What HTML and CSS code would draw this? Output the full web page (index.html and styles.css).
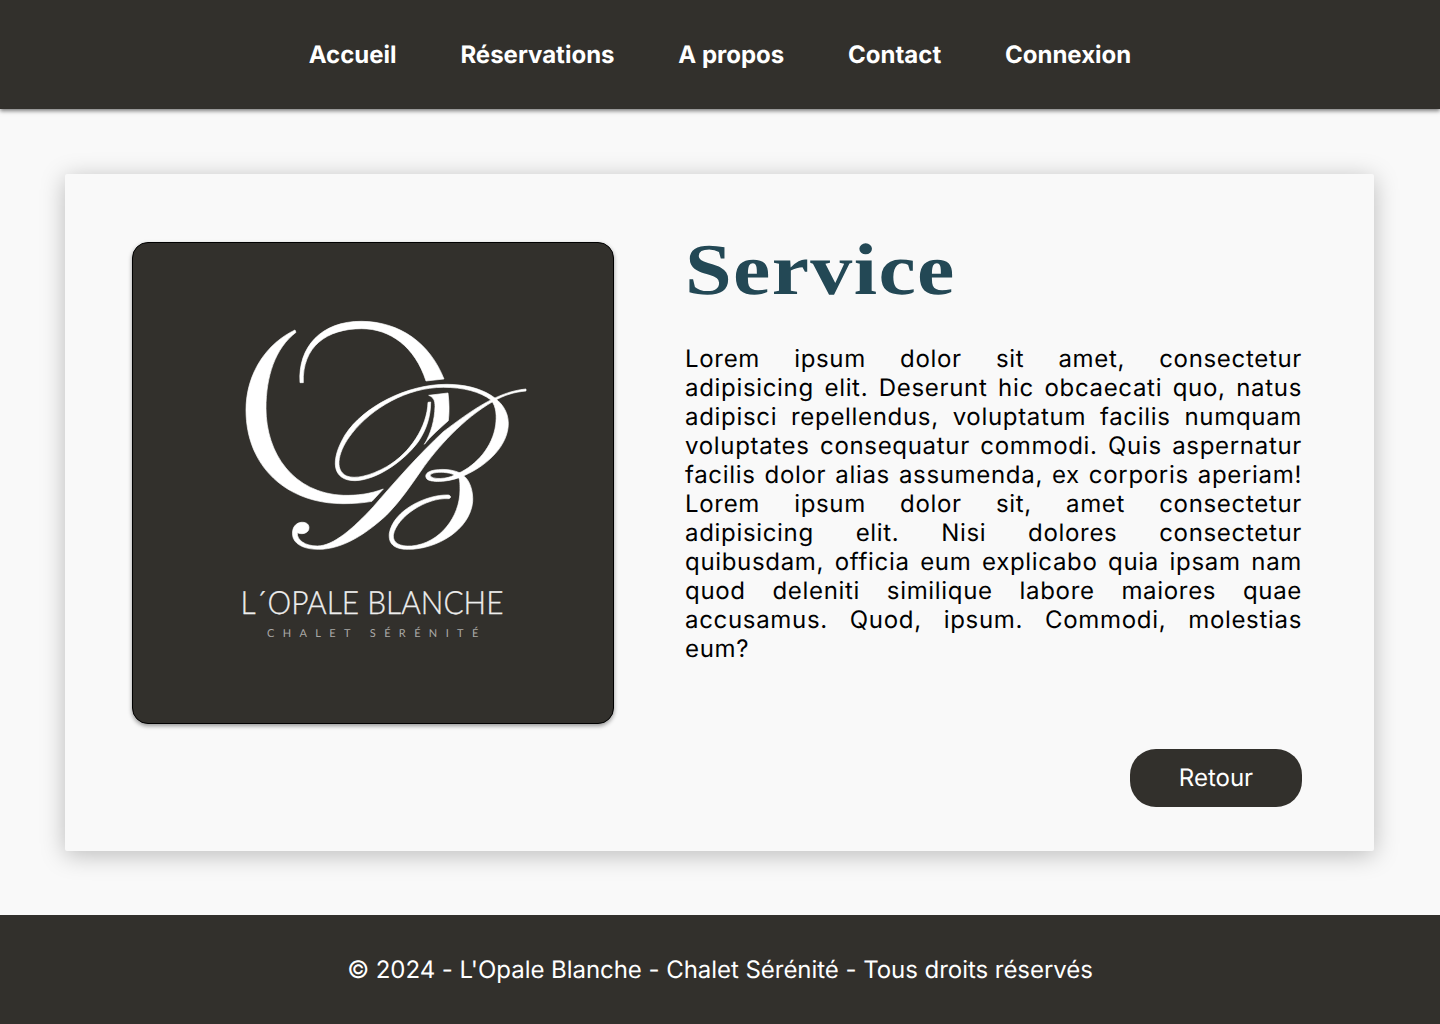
FILE: index.html
```html
<!DOCTYPE html>
<html lang="fr">
<head>
<meta charset="utf-8">
<title>L'Opale Blanche - Service</title>
<link rel="stylesheet" href="styles.css">
</head>
<body>
<header class="header">
  <nav class="nav">
    <a href="#">Accueil</a>
    <a href="#">Réservations</a>
    <a href="#">A propos</a>
    <a href="#">Contact</a>
    <a href="#">Connexion</a>
  </nav>
</header>
<main class="main">
  <article class="card">
    <div class="picture">
      <svg class="logo" viewBox="0 0 480 480" role="img" aria-label="L'Opale Blanche">
        <g class="emblem" transform="translate(97 67) scale(.33333)">
          <path d="M195 60C110 100 48 190 48 300C48 470 170 581 340 581C370 581 400 579 426 574L460 537C420 552 380 557 340 556C190 550 108 430 108 295C108 200 135 115 198 67Z"/>
          <path d="M210 218C203 110 275 33 395 34C510 35 600 100 642 207L588 213C555 110 480 56 395 56C290 56 216 110 220 218Z"/>
          <path d="M596 256L654 249C658 280 658 310 655 332C630 355 605 375 583 403C603 370 614 330 615 290C615 270 610 262 596 256Z"/>
          <path d="M594 277C592 350 540 430 470 470C420 498 375 508 350 498C310 480 326 420 366 370C425 295 530 232 640 232C700 232 750 245 783 270C800 290 800 320 797 345C788 410 740 465 685 490L702 497C775 465 835 405 835 340C835 270 755 223 650 223C530 223 400 290 345 375C300 450 305 512 375 512C440 510 520 455 565 395C592 355 602 315 602 276Z"/>
          <path d="M888 237C800 245 720 305 640 365C570 430 490 520 430 590C370 655 310 708 262 708C225 708 200 690 202 668C215 675 237 670 237 653C237 640 225 636 213 637C190 640 183 665 190 685C200 708 230 718 265 718C340 718 410 670 470 615C510 575 540 530 575 480C620 415 700 325 790 274C825 254 855 246 888 243Z"/>
          <path fill-rule="evenodd" d="M702 497C680 478 640 476 615 480C590 484 583 495 590 506C600 518 650 518 695 500ZM673 495C655 484 600 484 601 497C605 510 655 507 673 495Z"/>
          <path d="M700 497C720 510 730 545 728 575C720 660 620 718 535 718C490 718 475 700 478 670C490 600 590 553 655 555C664 557 664 565 655 566C590 562 500 620 490 675C488 700 510 710 545 708C630 700 690 620 690 540C690 520 690 510 685 500Z"/>
        </g>
        <text class="brand" x="107.500" y="371" textLength="263" lengthAdjust="spacingAndGlyphs">L´OPALE BLANCHE</text>
        <text class="tagline" x="134" y="393.500" textLength="220">CHALET SÉRÉNITÉ</text>
      </svg>
    </div>
    <section class="content">
      <h1 class="title">Service</h1>
      <p class="description">Lorem ipsum dolor sit amet, consectetur adipisicing elit. Deserunt hic obcaecati quo, natus adipisci repellendus, voluptatum facilis numquam voluptates consequatur commodi. Quis aspernatur facilis dolor alias assumenda, ex corporis aperiam! Lorem ipsum dolor sit, amet consectetur adipisicing elit. Nisi dolores consectetur quibusdam, officia eum explicabo quia ipsam nam quod deleniti similique labore maiores quae accusamus. Quod, ipsum. Commodi, molestias eum?</p>
      <a class="button" href="#">Retour</a>
    </section>
  </article>
</main>
<footer class="footer">© 2024 - L'Opale Blanche - Chalet Sérénité - Tous droits réservés</footer>
</body>
</html>
```
FILE: styles.css
```css
* { box-sizing: border-box; }
body {
  margin: 0;
  min-height: 1024px;
  display: flex;
  flex-direction: column;
  background: #f9f9f9;
  color: #000;
  font: 24px/29px Inter, sans-serif;
  text-rendering: geometricPrecision;
}
a { color: inherit; text-decoration: none; }
.header {
  padding: 40px 0;
  background: #32302c;
  color: #fff;
  box-shadow: 0 2px 4px rgba(0, 0, 0, .5);
}
.nav { display: flex; justify-content: center; gap: 63.8px; font-weight: 700; }
.main { flex: 1; display: flex; padding: 65px 66px 64px 65px; }
.card {
  flex: 1;
  display: flex;
  gap: 71px;
  padding: 68px 72px 44px 67px;
  background: #f9f9f9;
  border-radius: 2px;
  box-shadow: 0 4px 24px rgba(0, 0, 0, .25);
}
.picture {
  flex: none;
  width: 482px;
  height: 482px;
  background: #32302c;
  border: 1px solid #000;
  border-radius: 16px;
  box-shadow: 0 2px 4px rgba(0, 0, 0, .4);
}
.logo { display: block; width: 480px; height: 480px; fill: #fff; }
.emblem { stroke: #fff; stroke-width: 2; }
.brand { font: 300 32px Lato, sans-serif; fill: #eee; stroke: #eee; stroke-width: .3; }
.tagline { font: 400 11px Lato, sans-serif; letter-spacing: 8.7px; fill: #aaa9a7; }
.content { flex: 1; display: flex; flex-direction: column; }
.title {
  align-self: flex-start;
  margin: 0 0 42px;
  height: 60px;
  color: #234855;
  font: 700 73px/55px "Liberation Serif", serif;
  letter-spacing: 1.2px;
  transform: scaleX(1.15);
  transform-origin: left;
}
.description { margin: 0; text-align: justify; letter-spacing: .68px; }
.button {
  align-self: flex-end;
  width: 172px;
  margin-top: auto;
  padding: 14px 0 15px;
  border-radius: 26px;
  background: #32302c;
  color: #fff;
  text-align: center;
}
.footer {
  padding: 40px 0;
  background: #32302c;
  color: #fff;
  text-align: center;
  letter-spacing: -.045px;
}
```
